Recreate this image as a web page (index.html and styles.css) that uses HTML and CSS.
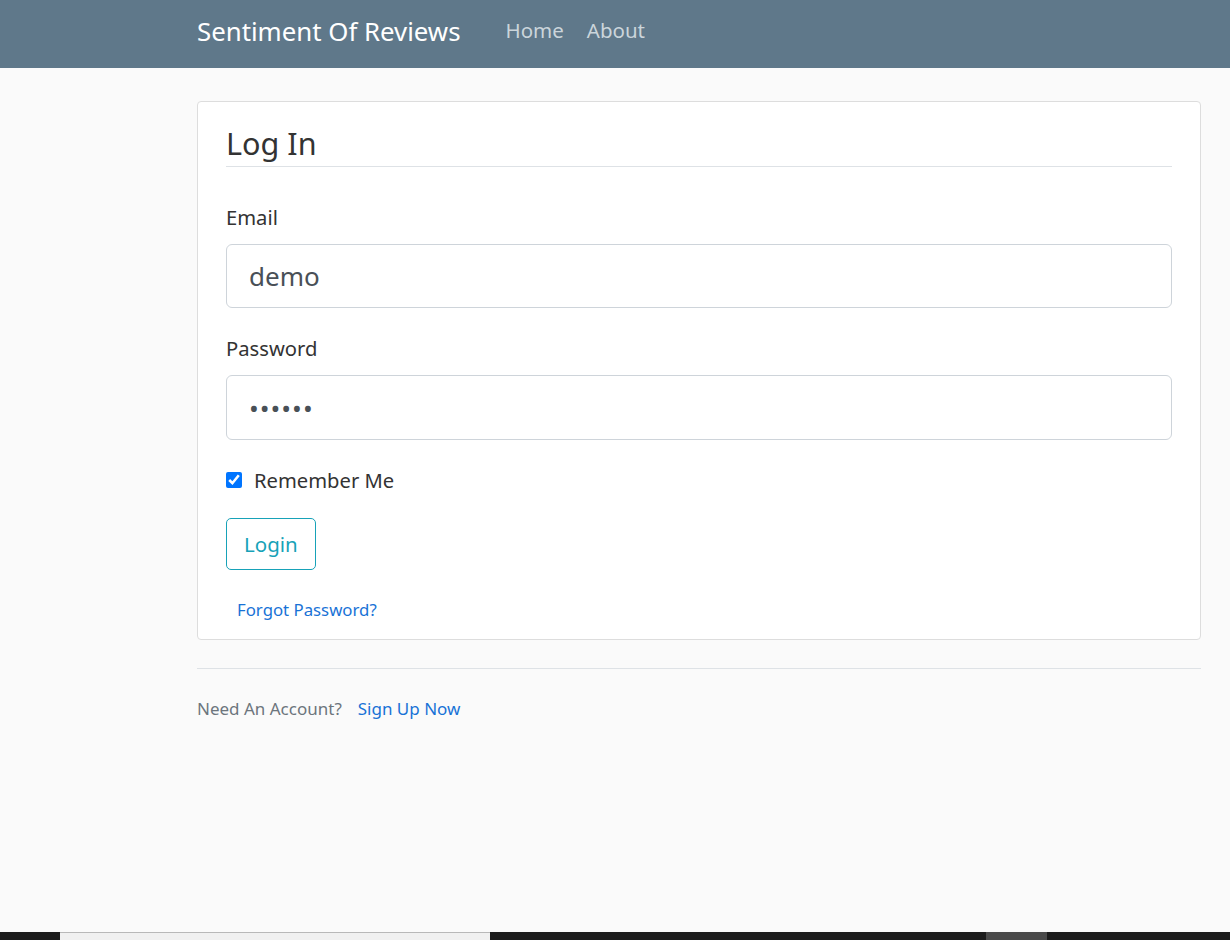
FILE: index.html
```html
<!DOCTYPE html>
<html lang="en">
<head>
<meta charset="utf-8">
<title>Log In</title>
<link rel="stylesheet" href="styles.css">
</head>
<body>
<header class="site-header">
  <nav class="navbar">
    <a class="brand" href="#">Sentiment Of Reviews</a>
    <div class="nav-links">
      <a class="nav-link" href="#">Home</a>
      <a class="nav-link" href="#">About</a>
    </div>
  </nav>
</header>
<main class="main">
  <div class="content-section">
    <form>
      <fieldset class="fieldset">
        <legend class="legend">Log In</legend>
        <div class="form-group">
          <label class="label" for="email">Email</label>
          <input class="form-control" id="email" type="text" value="demo">
        </div>
        <div class="form-group">
          <label class="label" for="password">Password</label>
          <input class="form-control pw" id="password" type="password" value="secret">
        </div>
        <div class="form-check">
          <input class="check" id="remember" type="checkbox" checked>
          <label class="check-label" for="remember">Remember Me</label>
        </div>
      </fieldset>
      <div class="actions">
        <button class="btn" type="button">Login</button>
      </div>
      <div class="forgot"><a href="#">Forgot Password?</a></div>
    </form>
  </div>
  <div class="signup">
    <span class="muted">Need An Account?</span>
    <a href="#">Sign Up Now</a>
  </div>
</main>
<div class="taskbar">
  <div class="tb-dark tb-a"></div>
  <div class="tb-light"></div>
  <div class="tb-dark tb-b"></div>
  <div class="tb-gray"></div>
  <div class="tb-dark tb-c"></div>
</div>
</body>
</html>
```

FILE: styles.css
```css
* { box-sizing: border-box; }
html, body { margin: 0; padding: 0; }
body {
  background: #fafafa;
  color: #333333;
  font-family: "Noto Sans", sans-serif;
  font-size: 20.2px;
  line-height: 30px;
  min-height: 940px;
  display: flex;
  flex-direction: column;
}
a { text-decoration: none; color: #1872d6; }

.site-header { background: #5f788a; height: 68px; }
.navbar {
  display: flex;
  align-items: flex-start;
  height: 68px;
  padding: 12px 0 0 197px;
}
.brand { color: #ffffff; font-size: 25.8px; line-height: 38px; margin-right: 45px; }
.nav-links { display: flex; gap: 23px; margin-top: 3px; }
.nav-link { color: #cbd5db; font-size: 20.5px; line-height: 30px; }

.main { flex: 1; padding: 33px 29px 0 197px; }
.content-section {
  background: #ffffff;
  border: 1px solid #dddddd;
  border-radius: 4px;
  padding: 18px 28px 16px 28px;
}
.fieldset { border: 0; margin: 0; padding: 0; min-width: 0; }
.legend {
  display: block;
  width: 100%;
  padding: 0;
  font-size: 30.6px;
  line-height: 46px;
  color: #333333;
  border-bottom: 1px solid #dee2e6;
  margin-bottom: 35px;
}
.form-group { margin-bottom: 25px; }
.label { display: block; margin-bottom: 12px; line-height: 30px; }
.form-control {
  display: block;
  width: 100%;
  height: 64px;
  padding: 0 22px;
  font-family: inherit;
  font-size: 26px;
  color: #495057;
  background: #ffffff;
  border: 1px solid #ced4da;
  border-radius: 6px;
  outline: none;
}
.pw { letter-spacing: 1px; height: 65px; }
.form-check { display: flex; align-items: center; gap: 12px; height: 30px; }
.check { width: 16px; height: 16px; margin: 0; accent-color: #0075ff; }
.check-label { line-height: 30px; }
.actions { margin-top: 23px; }
.btn {
  display: block;
  font-family: inherit;
  font-size: 20.5px;
  color: #17a2b8;
  background: transparent;
  border: 1px solid #17a2b8;
  border-radius: 5px;
  height: 52px;
  padding: 0 17px;
}
.forgot { padding-left: 11px; margin-top: 27px; font-size: 16.8px; line-height: 25.5px; }

.signup {
  margin-top: 28px;
  border-top: 1px solid #dee2e6;
  padding-top: 27px;
  font-size: 17px;
  line-height: 25.5px;
  display: flex;
  gap: 16px;
}
.muted { color: #6c757d; }

.taskbar { display: flex; height: 8px; }
.tb-dark { background: #1c1c1c; }
.tb-a { width: 60px; }
.tb-light { width: 430px; background: #f0f0f0; border-top: 1px solid #b8b8b8; }
.tb-b { width: 496px; }
.tb-gray { width: 61px; background: #4a4a4a; }
.tb-c { flex: 1; }
```
